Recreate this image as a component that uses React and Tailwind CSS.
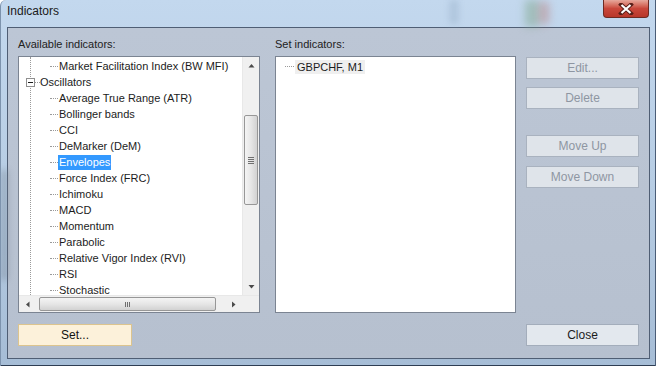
import React from "react";

const indicators = [
  { label: "Market Facilitation Index (BW MFI)", level: 1 },
  { label: "Oscillators", level: 0 },
  { label: "Average True Range (ATR)", level: 1 },
  { label: "Bollinger bands", level: 1 },
  { label: "CCI", level: 1 },
  { label: "DeMarker (DeM)", level: 1 },
  { label: "Envelopes", level: 1, selected: true },
  { label: "Force Index (FRC)", level: 1 },
  { label: "Ichimoku", level: 1 },
  { label: "MACD", level: 1 },
  { label: "Momentum", level: 1 },
  { label: "Parabolic", level: 1 },
  { label: "Relative Vigor Index (RVI)", level: 1 },
  { label: "RSI", level: 1 },
  { label: "Stochastic", level: 1 },
];

function Arrow({ dir }) {
  const d = {
    up: "M0.5 4.5 L3.5 1 L6.5 4.5 Z",
    down: "M0.5 1 L3.5 4.5 L6.5 1 Z",
    left: "M4.5 0.5 L1 3.5 L4.5 6.5 Z",
    right: "M1 0.5 L4.5 3.5 L1 6.5 Z",
  }[dir];
  const vertical = dir === "up" || dir === "down";
  return (
    <svg width={vertical ? 7 : 6} height={vertical ? 6 : 7} viewBox={vertical ? "0 0 7 6" : "0 0 6 7"}>
      <path d={d} fill="#4a4a4a" />
    </svg>
  );
}

function TreeRow({ item }) {
  if (item.level === 0) {
    return (
      <div className="relative h-4 leading-4">
        <div className="absolute left-[7px] top-[4px] w-[9px] h-[9px] border border-[#8f8f8f] bg-white flex items-center justify-center">
          <div className="w-[5px] h-px bg-[#1a1a1a]" />
        </div>
        <div className="absolute left-[16px] top-[8px] w-[5px] border-t border-dotted border-[#9a9a9a]" />
        <span className="ml-[21px]">{item.label}</span>
      </div>
    );
  }
  return (
    <div className="relative h-4 leading-4">
      <div className="absolute left-[31px] top-[8px] w-[8px] border-t border-dotted border-[#9a9a9a]" />
      <span
        className={
          item.selected
            ? "ml-[39px] px-px inline-block leading-[15px] bg-[#3399ff] text-white"
            : "ml-[40px]"
        }
      >
        {item.label}
      </span>
    </div>
  );
}

function Button({ children, disabled, className = "" }) {
  return (
    <div
      className={`h-[22px] flex items-center justify-center border text-[12px] ${
        disabled
          ? "bg-[#dfe4ea] border-[#a9b2bf] text-[#8e96a2]"
          : "bg-[#e3e8ee] border-[#a3adbb] text-[#1c1c1c]"
      } ${className}`}
    >
      {children}
    </div>
  );
}

export default function App() {
  return (
    <div className="w-[656px] h-[366px] relative overflow-hidden font-['Liberation_Sans',Arial,sans-serif] text-[#1c1c1c] bg-gradient-to-b from-[#c3d8ee] via-[#b7cde4] to-[#a6bdd6] border-l border-[#7d93ad] rounded-tl-[6px]">
      {/* ghost of the chart behind the glass */}
      <div className="absolute left-[524px] top-0 w-[14px] h-[27px] bg-[#7fa58a] opacity-50 blur-[4px]" />
      <div className="absolute left-[538px] top-[2px] w-[10px] h-[22px] bg-[#b86a62] opacity-40 blur-[4px]" />
      <div className="absolute left-[448px] top-0 w-[10px] h-[24px] bg-[#a5bcd4] opacity-60 blur-[3px]" />
      <div className="absolute left-0 top-[170px] w-[7px] h-[110px] bg-[#6d7a88] opacity-40 blur-[3px]" />

      <div className="h-[27px] pl-[6px] pt-[4px] leading-[15px] text-[12px] text-[#1a1a1a]">Indicators</div>

      <div className="absolute right-[7px] top-0 w-[46px] h-[18px] rounded-b-[4px] border border-t-0 border-[#6e2a22] bg-gradient-to-b from-[#e6a89c] via-[#c9473b] to-[#b8372a] flex items-center justify-center">
        <svg width="16" height="12" viewBox="0 0 16 12">
          <path d="M3 1.5 L13 10.5 M13 1.5 L3 10.5" stroke="#5a1f18" strokeWidth="4" strokeLinecap="square" />
          <path d="M3.5 2 L12.5 10 M12.5 2 L3.5 10" stroke="#ffffff" strokeWidth="2.2" />
        </svg>
      </div>

      <div className="mx-[6px] h-[332px] border border-[#4f5e74] bg-gradient-to-b from-[#bcc6d5] to-[#b6c0cf] px-[10px] pt-[10px] text-[11px]">
        <div className="flex">
          <div className="w-[242px]">
            <div className="h-[18px] leading-[13px] text-[#222]">Available indicators:</div>
            <div className="h-[257px] border border-[#7b8492] bg-white flex flex-col">
              <div className="flex h-[238px]">
                <div className="relative flex-1 overflow-hidden pt-px">
                  <div className="absolute left-[11px] top-0 bottom-0 border-l border-dotted border-[#9a9a9a]" />
                  {indicators.map((item) => (
                    <TreeRow key={item.label} item={item} />
                  ))}
                </div>
                <div className="w-[17px] flex flex-col bg-[#f0f0f0] border-l border-[#e8e8e8]">
                  <div className="h-[17px] flex items-center justify-center">
                    <Arrow dir="up" />
                  </div>
                  <div className="h-[41px]" />
                  <div className="h-[90px] mx-px rounded-[2px] border border-[#979797] bg-gradient-to-r from-[#f4f4f4] via-[#e6e6e6] to-[#d2d2d2] flex flex-col items-center justify-center gap-[1px]">
                    <div className="w-[6px] h-px bg-[#6f6f6f]" />
                    <div className="w-[6px] h-px bg-[#6f6f6f]" />
                    <div className="w-[6px] h-px bg-[#6f6f6f]" />
                    <div className="w-[6px] h-px bg-[#6f6f6f]" />
                  </div>
                  <div className="flex-1" />
                  <div className="h-[17px] flex items-center justify-center">
                    <Arrow dir="down" />
                  </div>
                </div>
              </div>
              <div className="flex h-[17px] bg-[#f0f0f0] border-t border-[#e8e8e8]">
                <div className="w-[17px] flex items-center justify-center">
                  <Arrow dir="left" />
                </div>
                <div className="w-[3px]" />
                <div className="w-[177px] my-px rounded-[2px] border border-[#979797] bg-gradient-to-b from-[#f4f4f4] via-[#e6e6e6] to-[#d2d2d2] flex items-center justify-center gap-[1px]">
                  <div className="w-px h-[5px] bg-[#6f6f6f]" />
                  <div className="w-px h-[5px] bg-[#6f6f6f]" />
                  <div className="w-px h-[5px] bg-[#6f6f6f]" />
                </div>
                <div className="flex-1" />
                <div className="w-[17px] flex items-center justify-center">
                  <Arrow dir="right" />
                </div>
                <div className="w-[17px] bg-[#f0f0f0]" />
              </div>
            </div>
          </div>

          <div className="w-[241px] ml-[15px]">
            <div className="h-[18px] leading-[13px] text-[#222]">Set indicators:</div>
            <div className="h-[257px] border border-[#7b8492] bg-white pt-[3px]">
              <div className="relative h-[14px] flex items-center">
                <div className="absolute left-[9px] top-[6px] w-[9px] border-t border-dotted border-[#9a9a9a]" />
                <span className="ml-[19px] px-[2px] leading-[14px] bg-[#efefef]">GBPCHF, M1</span>
              </div>
            </div>
          </div>

          <div className="w-[113px] ml-[10px] pt-[19px] flex flex-col">
            <Button disabled>Edit...</Button>
            <Button disabled className="mt-[8px]">Delete</Button>
            <Button disabled className="mt-[26px]">Move Up</Button>
            <Button disabled className="mt-[9px]">Move Down</Button>
          </div>
        </div>

        <div className="flex justify-between mt-[11px]">
          <div className="w-[114px] h-[22px] border border-[#dcc48e] bg-[#fcf1da] flex items-center justify-center text-[12px] text-[#111]">
            Set...
          </div>
          <Button className="w-[113px]">Close</Button>
        </div>
      </div>

      <div className="absolute left-0 right-0 bottom-0 h-px bg-[#2e3d52]" />
      <div className="absolute right-0 top-0 bottom-0 w-px bg-[#4a5d77]" />
    </div>
  );
}
